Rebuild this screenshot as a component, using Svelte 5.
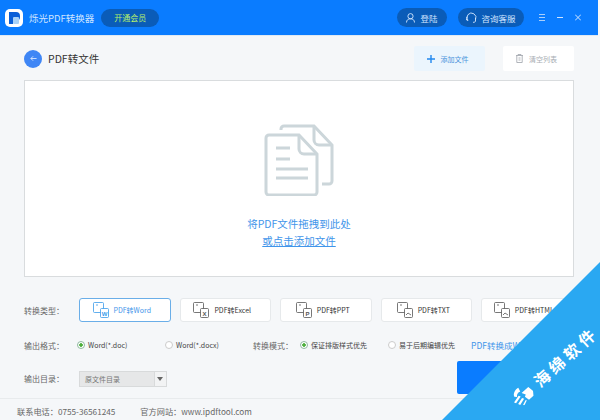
<script>
    const types = [
        { label: 'PDF转Word', mark: 'W', active: true },
        { label: 'PDF转Excel', mark: 'X' },
        { label: 'PDF转PPT', mark: 'P' },
        { label: 'PDF转TXT', mark: '' },
        { label: 'PDF转HTML', mark: '' }
    ];
</script>

<div class="window">
    <header class="titlebar">
        <div class="logo">
            <svg width="13" height="14" viewBox="0 0 13 14">
                <path d="M1 1h7a4 4 0 0 1 4 4v1a4 4 0 0 1-4 4H5v3H1z" fill="#0a5fd8" />
                <rect x="5" y="6" width="6" height="7" rx="1" fill="#a9d2f7" />
            </svg>
        </div>
        <span class="app-name">烁光PDF转换器</span>
        <span class="vip">开通会员</span>
        <div class="spacer"></div>
        <span class="pill login">
            <svg width="9" height="10" viewBox="0 0 9 10" fill="none" stroke="#d5e8ff" stroke-width="0.900">
                <circle cx="4.500" cy="3.200" r="2.600" />
                <path d="M.5 9.500c0-2.500 1.700-3.700 4-3.700s4 1.200 4 3.700" />
            </svg>
            登陆
        </span>
        <span class="pill service">
            <svg width="12" height="11" viewBox="0 0 12 11" fill="none" stroke="#d5e8ff" stroke-width="0.900">
                <path d="M2 8.500a4.500 4.500 0 1 1 7.500-1" />
                <path d="M9.500 6v3c0 1-1 1.300-2.500 1.300" />
                <path d="M2 5a1.500 1.500 0 0 0 0 3.500" />
            </svg>
            咨询客服
        </span>
        <div class="win-controls">
            <svg width="6" height="7" viewBox="0 0 6 7" stroke="#a9cffb" stroke-width="1">
                <path d="M0 .5h6M0 3.500h6M0 6.500h6" />
            </svg>
            <svg width="6" height="7" viewBox="0 0 6 7" stroke="#cfe4ff" stroke-width="1">
                <path d="M0 3.500h6" />
            </svg>
            <svg width="6" height="7" viewBox="0 0 6 7" stroke="#cfe4ff" stroke-width="1">
                <path d="M0 .5l6 6M6 .5l-6 6" />
            </svg>
        </div>
    </header>

    <main class="content">
        <div class="head">
            <span class="back">
                <svg width="7" height="7" viewBox="0 0 8 8" fill="none" stroke="#dbe8ff" stroke-width="1">
                    <path d="M7.500 4H1M3.500 1.500L1 4l2.500 2.500" />
                </svg>
            </span>
            <h1>PDF转文件</h1>
            <div class="spacer"></div>
            <button class="add">
                <svg width="8" height="8" viewBox="0 0 8 8" stroke="#2288ee" stroke-width="1.400">
                    <path d="M4 0v8M0 4h8" />
                </svg>
                添加文件
            </button>
            <button class="clear">
                <svg width="7" height="9" viewBox="0 0 7 9" fill="none" stroke="#a8adb3" stroke-width="0.900">
                    <path d="M0 1.500h7M2 1.500V.5h3v1M.8 1.500v7h5.400v-7M2.500 4h2M2.500 6h2" />
                </svg>
                清空列表
            </button>
        </div>

        <section class="drop">
            <svg width="72" height="72" viewBox="0 0 72 72" fill="none" stroke="#ccd6da" stroke-width="3">
                <path d="M18 6V5a3 3 0 0 1 3-3h30l18 19v36a3 3 0 0 1-3 3h-7" />
                <path d="M51 3v13a5 5 0 0 0 5 5h12" />
                <path d="M3 14a3 3 0 0 1 3-3h30l18 19v38a3 3 0 0 1-3 3H6a3 3 0 0 1-3-3z" fill="#fff" />
                <path d="M36 12v13a5 5 0 0 0 5 5h12" />
                <path d="M13 24h14M13 35h14M13 45h32M13 54h32" />
            </svg>
            <p class="hint">将PDF文件拖拽到此处</p>
            <p class="hint link">或点击添加文件</p>
        </section>

        <div class="row types">
            <span class="label">转换类型：</span>
            <div class="type-list">
                {#each types as t}
                    <div class="type" class:active={t.active}>
                        <svg width="16" height="16" viewBox="0 0 16 16" fill="none" stroke={t.active ? '#3a9bea' : '#555'} stroke-width="0.800">
                            <rect x="0.500" y="0.500" width="10" height="10" rx="1" />
                            <path d="M3 3h2" />
                            <rect x="7.500" y="6.500" width="8" height="9" rx="1" fill="#fff" />
                            {#if t.mark}
                                <text x="11.500" y="13.500" class="mark" fill={t.active ? '#3a9bea' : '#555'} stroke="none">{t.mark}</text>
                            {:else}
                                <path d="M9 13l2-2 3 2" />
                            {/if}
                        </svg>
                        <span>{t.label}</span>
                    </div>
                {/each}
            </div>
        </div>

        <div class="row options">
            <span class="label">输出格式：</span>
            <span class="radio on col-a">Word(*.doc)</span>
            <span class="radio col-b">Word(*.docx)</span>
            <span class="label mode">转换模式：</span>
            <span class="radio on col-c">保证排版样式优先</span>
            <span class="radio col-d">易于后期编辑优先</span>
            <span class="guide">PDF转换成Word教程</span>
        </div>

        <div class="row output">
            <div class="dir">
                <span class="label">输出目录：</span>
                <div class="select">
                    <span>原文件目录</span>
                    <i class="caret"></i>
                </div>
            </div>
            <div class="spacer"></div>
            <button class="start">开始转换</button>
        </div>
    </main>

    <footer class="footer">
        <span>联系电话：0755-36561245</span>
        <span>官方网站：www.ipdftool.com</span>
    </footer>

    <div class="ribbon">
        <span class="ribbon-text">
            <svg width="22" height="18" viewBox="0 0 22 18" fill="#fff">
                <path d="M4 5C5 2 9 0 13 1l-1 4C9 4 7 5 6 7z" />
                <path d="M0 9l8-2 1 2-8 2zM2 13l7-2 1 2-7 2zM5 17l5-2 1 1-5 2z" />
                <path d="M12 7h9l1 6-3 4h-6l-1-5 2-1z" />
            </svg>
            <span class="ribbon-name">海绵软件</span>
        </span>
    </div>
</div>

<style>
    :global(body) {
        margin: 0;
    }

    .window {
        position: relative;
        width: 600px;
        height: 420px;
        overflow: hidden;
        display: flex;
        flex-direction: column;
        background: #f5f7f9;
        font-family: "Noto Sans CJK SC", "Liberation Sans", sans-serif;
        color: #444;
    }

    .spacer {
        flex: 1;
    }

    .titlebar {
        height: 36px;
        flex: none;
        display: flex;
        align-items: center;
        background: #0a7cff;
        border-bottom: 1px solid #dfe9f3;
        padding: 0 17px 0 5px;
        box-sizing: border-box;
        margin-right: 2px;
    }

    .logo {
        width: 18px;
        height: 18px;
        background: #fff;
        border-radius: 5px;
        display: flex;
        align-items: center;
        justify-content: center;
    }

    .app-name {
        margin-left: 6px;
        font-size: 9.500px;
        color: #cfe4ff;
    }

    .vip {
        margin-left: 7px;
        width: 58px;
        height: 18px;
        line-height: 18px;
        text-align: center;
        border-radius: 9px;
        background: #0a5cb8;
        color: #b6ef6a;
        font-size: 8px;
    }

    .pill {
        height: 19px;
        display: flex;
        align-items: center;
        justify-content: center;
        gap: 5px;
        border-radius: 10px;
        background: #0a5cb8;
        color: #cfe4ff;
        font-size: 8.500px;
    }

    .login {
        width: 50px;
    }

    .service {
        width: 66px;
        margin-left: 11px;
        gap: 3px;
    }

    .win-controls {
        display: flex;
        gap: 12px;
        margin-left: 15px;
    }

    .content {
        flex: 1;
        min-height: 0;
        padding: 0 26px 0 24px;
        display: flex;
        flex-direction: column;
    }

    .head {
        height: 44px;
        flex: none;
        box-sizing: border-box;
        padding-top: 1px;
        display: flex;
        align-items: center;
    }

    .back {
        width: 18px;
        height: 18px;
        border-radius: 50%;
        background: #3f86f5;
        display: flex;
        align-items: center;
        justify-content: center;
    }

    h1 {
        margin: 0 0 0 6px;
        font-size: 10.500px;
        font-weight: 400;
        color: #333;
    }

    .head button {
        height: 25px;
        width: 71px;
        display: flex;
        align-items: center;
        justify-content: center;
        border: none;
        border-radius: 2px;
        font: inherit;
        font-size: 7px;
        padding: 0 4px 0 0;
    }

    .add {
        background: #ebf5fd;
        color: #4a94dc;
        gap: 6px;
    }

    .clear {
        margin-left: 18px;
        background: #fff;
        color: #a8adb3;
        gap: 6px;
    }

    .drop {
        height: 197px;
        flex: none;
        box-sizing: border-box;
        background: #fff;
        border: 1px solid #d9dcde;
        display: flex;
        flex-direction: column;
        align-items: center;
        padding-top: 43px;
    }

    .drop svg {
        display: block;
    }

    .hint {
        margin: 20px 0 0;
        font-size: 10.500px;
        line-height: 16px;
        color: #3f95ea;
    }

    .hint.link {
        margin-top: 1px;
        text-decoration: underline;
    }

    .row {
        display: flex;
        align-items: center;
        font-size: 7px;
        white-space: nowrap;
        flex: none;
    }

    .label {
        color: #666;
        font-size: 8px;
        width: 55px;
        flex: none;
    }

    .types {
        margin-top: 21px;
        height: 24px;
    }

    .type-list {
        display: flex;
        gap: 9px;
    }

    .type {
        width: 91.500px;
        height: 24px;
        flex: none;
        box-sizing: border-box;
        padding-right: 6px;
        display: flex;
        align-items: center;
        justify-content: center;
        gap: 5px;
        background: #fff;
        border: 1px solid #e6e9eb;
        border-radius: 3px;
        font-size: 7px;
        color: #333;
    }

    .type.active {
        border-color: #6aaee8;
        color: #3f95ea;
    }

    .mark {
        font-family: "Liberation Sans", sans-serif;
        font-size: 6px;
        font-weight: 700;
        text-anchor: middle;
    }

    .options {
        margin-top: 13px;
        height: 20px;
    }

    .radio {
        display: flex;
        align-items: center;
        gap: 3px;
        color: #444;
    }

    .radio::before {
        content: "";
        width: 8px;
        height: 8px;
        box-sizing: border-box;
        border-radius: 50%;
        border: 1px solid #ccc;
        background: #fff;
    }

    .radio.on::before {
        border-color: #8fb9a0;
        background: radial-gradient(circle, #4caf3c 0 1.500px, #fff 2px);
    }

    .options .label {
        width: 53px;
    }

    .col-a {
        width: 88px;
    }

    .col-b {
        width: 88px;
    }

    .options .mode {
        width: 47px;
    }

    .col-c {
        width: 88px;
    }

    .col-d {
        width: 83px;
    }

    .guide {
        color: #3f95ea;
        font-size: 8.500px;
    }

    .output {
        margin-top: 6px;
        height: 33px;
    }

    .dir {
        display: flex;
        align-items: center;
        padding-top: 2px;
    }

    .select {
        width: 88px;
        height: 16px;
        display: flex;
        align-items: center;
        background: #e6e7e8;
        border: 1px solid #d8dadb;
        box-sizing: border-box;
        color: #777;
        font-size: 7px;
        padding-left: 5px;
        position: relative;
    }

    .caret {
        position: absolute;
        right: 0;
        top: 0;
        bottom: 0;
        width: 11px;
        background: #f2f3f4;
        border-left: 1px solid #d8dadb;
    }

    .caret::after {
        content: "";
        position: absolute;
        left: 2px;
        top: 5px;
        border: 3px solid transparent;
        border-top: 4px solid #666;
    }

    .start {
        width: 117px;
        height: 33px;
        border: none;
        border-radius: 2px;
        background: #0a7cff;
        color: #fff;
        font: inherit;
        font-size: 12px;
    }

    .footer {
        height: 22px;
        flex: none;
        box-sizing: border-box;
        border-top: 1px solid #e8ebed;
        margin-right: 2px;
        padding: 3px 0 0 17px;
        display: flex;
        align-items: center;
        gap: 25px;
        font-size: 8.200px;
        color: #666;
    }

    .ribbon {
        position: absolute;
        right: 0;
        bottom: 0;
        width: 158px;
        height: 158px;
        background: #2aa8f2;
        clip-path: polygon(100% 0, 100% 100%, 0 100%);
    }

    .ribbon-text {
        position: absolute;
        left: 58px;
        top: 92px;
        display: flex;
        align-items: center;
        gap: 7px;
        transform: rotate(-42deg);
        color: #fff;
        white-space: nowrap;
    }

    .ribbon-name {
        font-family: "Noto Sans CJK SC", sans-serif;
        font-size: 16px;
        font-weight: 700;
        letter-spacing: 4px;
    }
</style>
